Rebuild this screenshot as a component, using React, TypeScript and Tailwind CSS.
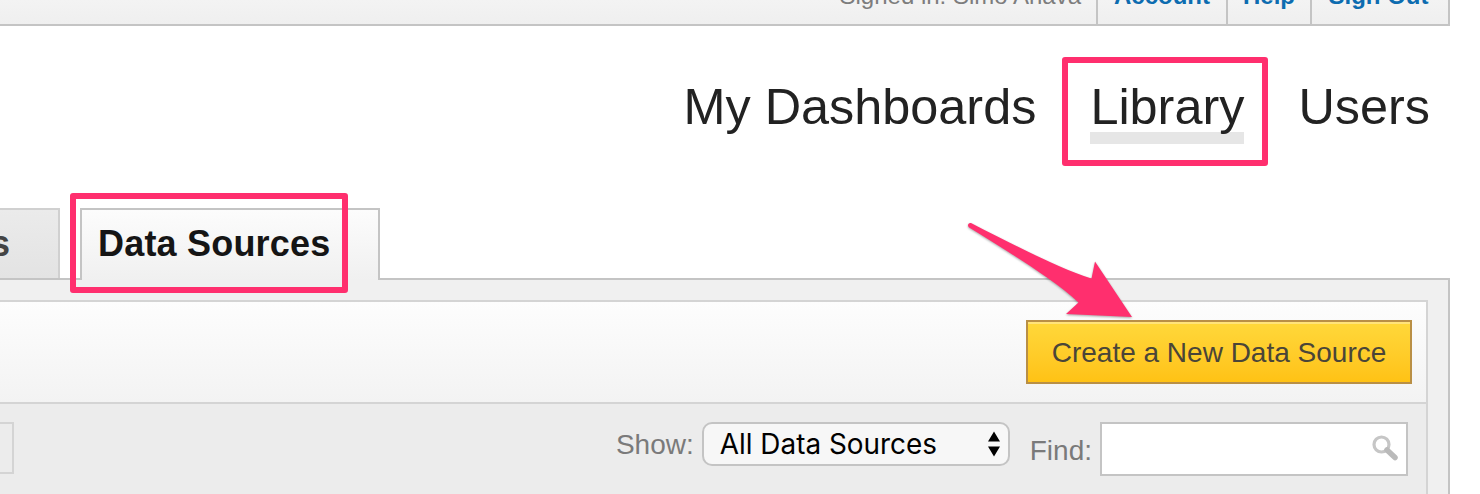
import { clsx } from 'clsx';

const accountLinks = [
    { label: 'Account', className: 'w-[130px]' },
    { label: 'Help', className: 'w-[84px]' },
    { label: 'Sign Out', className: 'w-[138px] pr-[3px]' },
];

function TopBar() {
    return (
        <div className="flex h-[26px] w-[1450px] items-end justify-end overflow-hidden border-r-2 border-b-2 border-[#c4c4c4] bg-linear-to-b from-[#f3f3f3] to-[#efefef] text-[24px] leading-[28px]">
            <span className="mb-[14px] pr-[15px] text-[#7d7d7d]">Signed in: Simo Ahava</span>
            {accountLinks.map((link) => (
                <a
                    key={link.label}
                    className={clsx('border-l-2 border-[#c4c4c4] pb-[14px] text-center font-bold text-[#0d6cb0]', link.className)}
                >
                    {link.label}
                </a>
            ))}
        </div>
    );
}

function MainNav() {
    return (
        <nav className="flex h-[182px] w-[1430px] items-start justify-end gap-[54px] pt-[51px] text-[50.4px] leading-[60px] text-[#222222]">
            <a>My Dashboards</a>
            <a className="relative">
                <span className="absolute inset-x-0 top-[55px] h-[12px] bg-[#e6e6e6]" />
                <span className="relative">Library</span>
                <span className="absolute -top-[20px] -left-[28px] h-[109px] w-[206px] rounded-[3px] border-[6px] border-[#ff2f6e]" />
            </a>
            <a>Users</a>
        </nav>
    );
}

function Tabs() {
    return (
        <div className="relative z-10 -mb-[2px] flex h-[72px] items-start text-[36px] leading-[42px] font-bold">
            <div className="flex h-[70px] w-[60px] overflow-hidden border-t-2 border-r-2 border-[#d0d0d0] bg-linear-to-b from-[#ebebeb] to-[#e3e3e3] pt-[13px] text-[#444444]">
                <span className="-ml-[10px]">s</span>
            </div>
            <div className="relative ml-[20px] h-[72px] w-[300px] border-x-2 border-t-2 border-[#c4c4c4] bg-linear-to-b from-[#fcfcfc] to-[#f0f0f0] pt-[13px] pl-[16px] text-[#151515]">
                <span className="tracking-[0.2px]">Data Sources</span>
                <span className="absolute -top-[17px] -left-[12px] h-[100px] w-[278px] rounded-[3px] border-[6px] border-[#ff2f6e]" />
            </div>
        </div>
    );
}

function SearchIcon() {
    return (
        <svg width="28" height="28" viewBox="0 0 28 28" fill="none" className="shrink-0">
            <circle cx="10.5" cy="9.5" r="7.5" stroke="#c6c6c6" strokeWidth="3.2" />
            <path d="M16 15L24 22.5" stroke="#bababa" strokeWidth="5.5" strokeLinecap="round" />
        </svg>
    );
}

function Toolbar() {
    return (
        <div className="flex h-[90px] items-start bg-[#ececec] pt-[18px] pr-[18px] text-[28px] leading-[32px] text-[#7a7a7a]">
            <div className="h-[52px] w-[14px] border-y-2 border-r-2 border-[#d4d4d4]" />
            <span className="mt-[7px] ml-auto">Show:</span>
            <div className="ml-[8px] flex h-[44px] w-[308px] items-center justify-between rounded-[10px] border-2 border-[#c4c4c4] bg-[#f7f7f7] pr-[7px] pl-[16px] font-['Inter',sans-serif] text-[27.9px] text-black">
                <span>All Data Sources</span>
                <svg width="14" height="26" viewBox="0 0 14 26" className="shrink-0">
                    <path d="M7 0.5L13 10.5H1ZM7 25.5L13 15.5H1Z" fill="#000000" />
                </svg>
            </div>
            <span className="mt-[13px] ml-[20px]">Find:</span>
            <div className="ml-[8px] flex h-[54px] w-[308px] items-center justify-end border-2 border-[#c4c4c4] bg-white pr-[7px]">
                <SearchIcon />
            </div>
        </div>
    );
}

function Arrow() {
    return (
        <svg
            width="172"
            height="104"
            viewBox="0 0 172 104"
            className="absolute top-[218px] left-[963px] z-20 drop-shadow-[0_1px_1px_rgba(0,0,0,0.35)]"
        >
            <path
                d="M8.5 5.2C46 24.5 95 50 128.5 60.5L132 43.5L169 99L103 96L115.5 84.5C89 60 42 32 6.5 9.8C3.5 7.5 5.5 4 8.5 5.2Z"
                fill="#ff2f6e"
            />
        </svg>
    );
}

export default function App() {
    return (
        <div className="relative h-[494px] w-[1480px] overflow-hidden bg-white font-['Liberation_Sans',Arial,sans-serif] whitespace-nowrap">
            <TopBar />
            <MainNav />
            <Tabs />
            <div className="h-[216px] w-[1450px] border-t-2 border-r-2 border-[#c4c4c4] bg-[#f0f0f0] pt-[20px]">
                <div className="w-[1428px] border-t-2 border-r-2 border-[#d4d4d4]">
                    <div className="flex h-[102px] items-start justify-end border-b-2 border-[#d4d4d4] bg-linear-to-b from-[#fdfdfd] to-[#f3f3f3] pt-[18px] pr-[14px]">
                        <button className="h-[64px] w-[386px] border-2 border-[#b98f45] bg-linear-to-b from-[#ffd83a] to-[#ffc214] pt-[2px] text-[28px] leading-[32px] text-[#4a4538] shadow-[inset_0_2px_0_#ffe37a]">
                            Create a New Data Source
                        </button>
                    </div>
                    <Toolbar />
                </div>
            </div>
            <Arrow />
        </div>
    );
}
